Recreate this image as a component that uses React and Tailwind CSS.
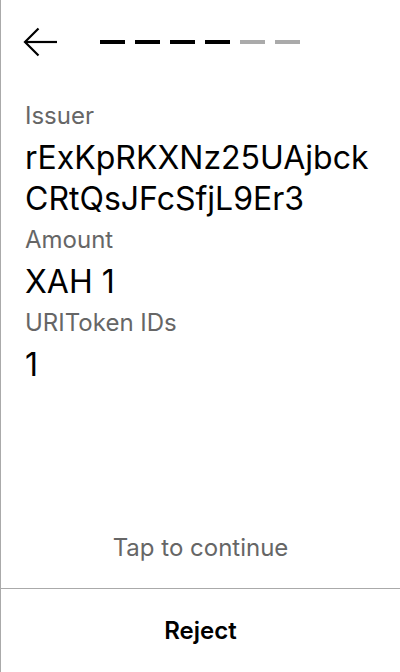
import { useState } from 'react';

const steps = [true, true, true, true, false, false];

const Field = ({ label, value }) => (
  <div>
    <p className="text-[24px] leading-[42px] text-[#666666]">{label}</p>
    <p className="text-[32px] leading-[41px] text-black break-all">{value}</p>
  </div>
);

const App = () => {
  const [tapped, setTapped] = useState(false);

  return (
    <div
      className="h-[672px] w-[400px] flex flex-col bg-white border-l border-[#aaaaaa]"
      style={{ fontFamily: 'Inter, "Noto Sans", sans-serif' }}
    >
      <div className="flex items-center pl-[22px] pt-[27px] h-[57px]">
        <button className="w-9 h-[30px] flex items-center" aria-label="Back">
          <svg width="36" height="30" viewBox="0 0 36 30" fill="none" stroke="black" strokeWidth="2.2">
            <path d="M34 15H2" />
            <path d="M15.5 1.5L2 15L15.5 28.5" />
          </svg>
        </button>
        <div className="flex gap-[10px] ml-[41px]">
          {steps.map((done, i) => (
            <span key={i} className={`block w-[25px] h-[4px] ${done ? 'bg-black' : 'bg-[#aaaaaa]'}`} />
          ))}
        </div>
      </div>

      <div className="flex-1 flex flex-col pl-6 pr-6 pt-[38px]" onClick={() => setTapped(!tapped)}>
        <Field label="Issuer" value="rExKpRKXNz25UAjbckCRtQsJFcSfjL9Er3" />
        <Field label="Amount" value="XAH 1" />
        <Field label="URIToken IDs" value="1" />
        <p className="mt-auto mb-[24px] text-center text-[24px] leading-[32px] text-[#666666]">Tap to continue</p>
      </div>

      <button className="h-[84px] border-t border-[#aaaaaa] text-[24px] font-semibold text-black">
        Reject
      </button>
    </div>
  );
};

export default App;
